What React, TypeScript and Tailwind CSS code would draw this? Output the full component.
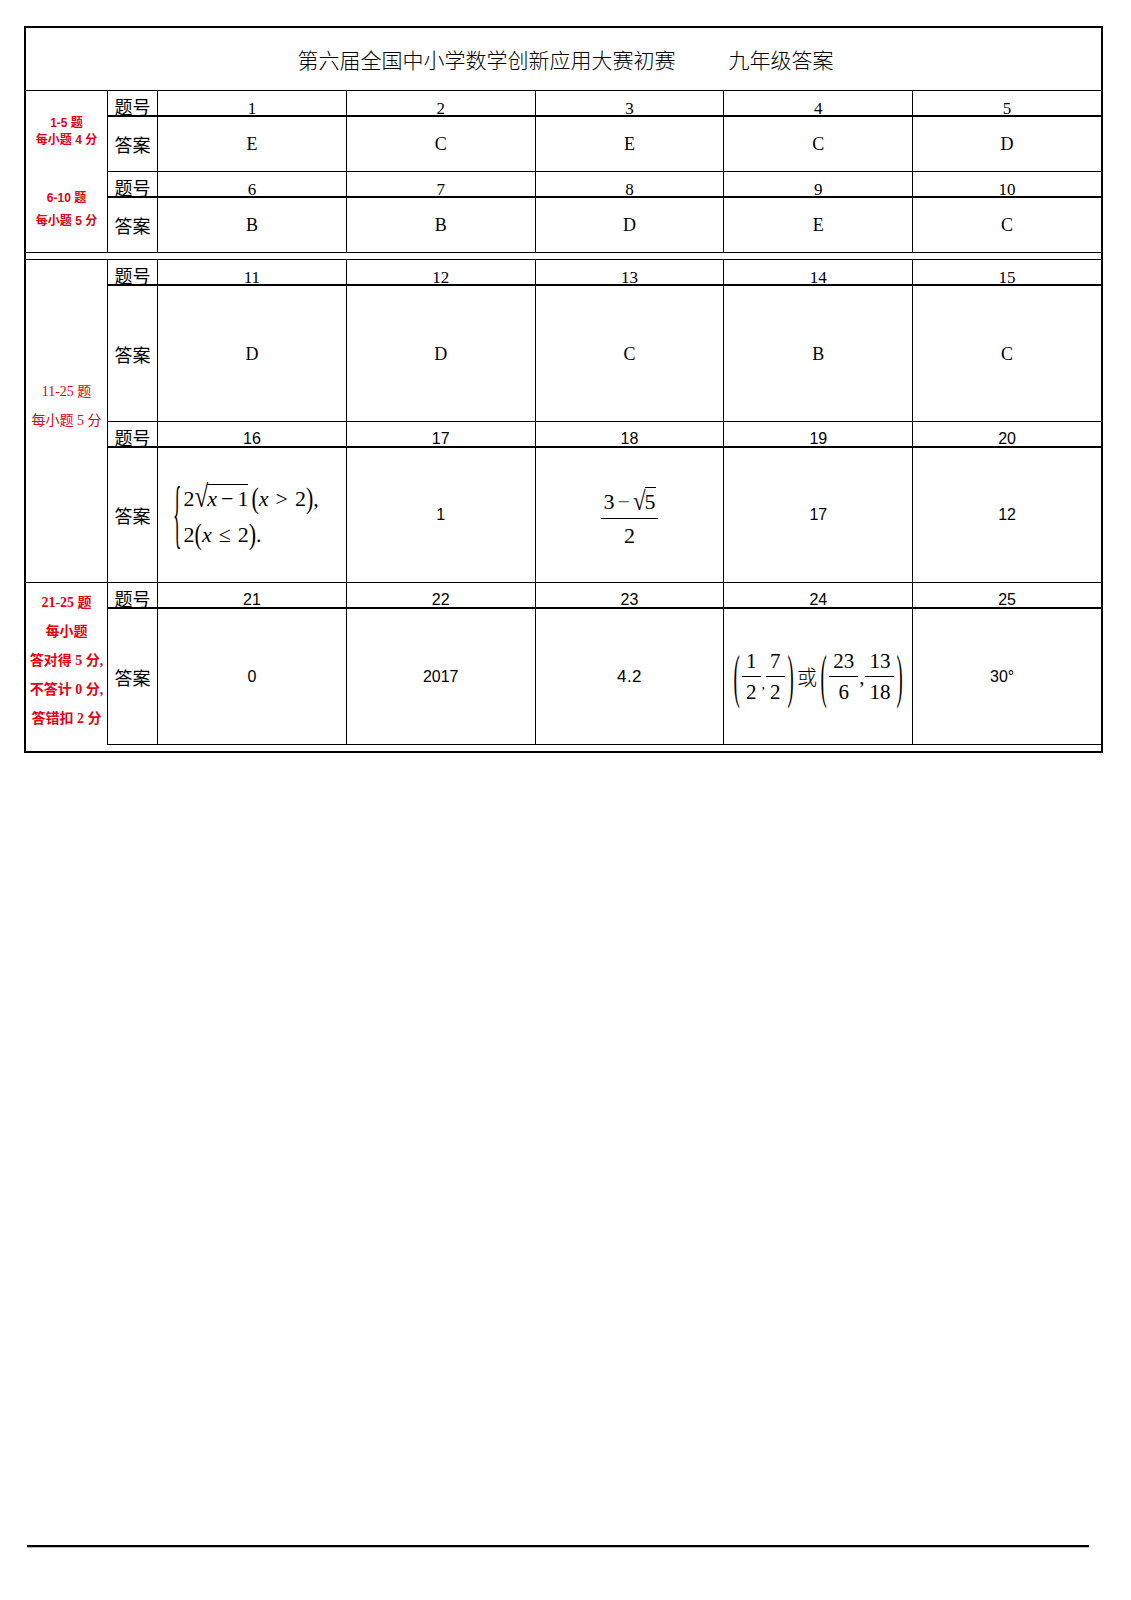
import React from "react";

const SERIF = "font-['Liberation_Serif','Noto_Sans_CJK_SC',serif]";
const SANS = "font-['Liberation_Sans','Noto_Sans_CJK_SC',sans-serif]";
const CJK = "font-['Noto_Sans_CJK_SC',sans-serif]";

function HeadLabel() {
  return (
    <div className="bg-white border-b border-black flex items-end justify-center">
      <span className={`${CJK} text-[18px] leading-none text-black`}>题号</span>
    </div>
  );
}

function AnsLabel({ last }: { last?: boolean }) {
  return (
    <div className={`bg-white flex items-center justify-center ${last ? "border-b border-black" : ""}`}>
      <span className={`${CJK} text-[18px] leading-none text-black`}>答案</span>
    </div>
  );
}

function HeadNum({ n, sans }: { n: string; sans?: boolean }) {
  return (
    <div className="bg-white border-b border-black flex items-end justify-center">
      {sans ? (
        <span className={`${SANS} text-[16px] leading-none translate-y-[1px] text-black`}>{n}</span>
      ) : (
        <span className={`${SERIF} text-[17px] leading-none translate-y-[2px] text-black`}>{n}</span>
      )}
    </div>
  );
}

function Ans({ children, last, className }: { children: React.ReactNode; last?: boolean; className?: string }) {
  return (
    <div className={`bg-white flex items-center justify-center ${last ? "border-b border-black" : ""} ${className ?? ""}`}>
      {children}
    </div>
  );
}

function Letter({ c }: { c: string }) {
  return <span className={`${SERIF} text-[18px] leading-none text-black`}>{c}</span>;
}

function Num({ c, className }: { c: string; className?: string }) {
  return <span className={`${SANS} text-[16px] leading-none text-black ${className ?? ""}`}>{c}</span>;
}

function Frac({ n, d }: { n: React.ReactNode; d: React.ReactNode }) {
  return (
    <span className="inline-flex flex-col items-center leading-none mx-[2px]">
      <span className="px-[4px] pb-[4px]">{n}</span>
      <span className="h-px w-full bg-black" />
      <span className="px-[4px] pt-[5px]">{d}</span>
    </span>
  );
}

function Sqrt({ children, big }: { children: React.ReactNode; big?: boolean }) {
  return (
    <span className="inline-flex items-end leading-none">
      <span
        className={`inline-block leading-none origin-bottom mr-[-1px] ${
          big ? "text-[25px] scale-y-[1.25] translate-y-[2px]" : "text-[23px] scale-y-[1.15] translate-y-[2px]"
        }`}
      >
        √
      </span>
      <span className="inline-block border-t-[1.5px] border-black pt-[3px] leading-none">{children}</span>
    </span>
  );
}

function BigParen({ c }: { c: string }) {
  return <span className="inline-block text-[22px] leading-none scale-y-[2.7] scale-x-[0.85] font-light">{c}</span>;
}

function Piecewise() {
  return (
    <div className={`flex items-center ${SERIF} text-black`}>
      <span className="inline-block text-[22px] leading-none scale-y-[3.5] scale-x-[0.8] mr-[1px] translate-y-[-1px]">{"{"}</span>
      <div className="flex flex-col gap-[14px] text-[22px] leading-none">
        <div className="flex items-end whitespace-nowrap">
          <span>2</span>
          <Sqrt big>
            <span className="italic">x</span>
            <span className="mx-[4px]">−</span>
            <span>1</span>
          </Sqrt>
          <span className="inline-block scale-y-[1.35] ml-[3px]">(</span>
          <span className="italic">x</span>
          <span className="mx-[7px]">&gt;</span>
          <span>2</span>
          <span className="inline-block scale-y-[1.35]">)</span>
          <span>,</span>
        </div>
        <div className="flex items-end whitespace-nowrap">
          <span>2</span>
          <span className="inline-block scale-y-[1.35]">(</span>
          <span className="italic">x</span>
          <span className="mx-[7px]">≤</span>
          <span>2</span>
          <span className="inline-block scale-y-[1.35]">)</span>
          <span>.</span>
        </div>
      </div>
    </div>
  );
}

function Ans18() {
  return (
    <span className={`${SERIF} text-[22px] text-black inline-flex flex-col items-center leading-none mt-[4px]`}>
      <span className="flex items-end px-[2px] pb-[5px]">
        <span>3</span>
        <span className="mx-[3px] text-[#666]">−</span>
        <Sqrt>
          <span>5</span>
        </Sqrt>
      </span>
      <span className="h-[1.5px] w-full bg-black" />
      <span className="pt-[6px]">2</span>
    </span>
  );
}

function Ans24() {
  return (
    <span className={`${SERIF} text-[21px] text-black inline-flex items-center leading-none`}>
      <BigParen c="(" />
      <Frac n="1" d="2" />
      <span className="self-center translate-y-[8px] text-[14px] mx-[-1px]">,</span>
      <Frac n="7" d="2" />
      <BigParen c=")" />
      <span className={`${CJK} text-[20px] font-light mx-[3px]`}>或</span>
      <BigParen c="(" />
      <Frac n="23" d="6" />
      <span className="self-center translate-y-[1px] mx-[-1px]">,</span>
      <Frac n="13" d="18" />
      <BigParen c=")" />
    </span>
  );
}

function RedBold({ children }: { children: React.ReactNode }) {
  return (
    <div className={`${SANS} font-bold text-[12px] leading-none text-[#e60012] whitespace-nowrap`}>{children}</div>
  );
}

function RedBold2({ children }: { children: React.ReactNode }) {
  return (
    <div className={`${SERIF} font-bold text-[14px] leading-none text-[#e60012] whitespace-nowrap`}>{children}</div>
  );
}

export default function App() {
  return (
    <div className="w-[1131px] min-h-[1600px] bg-white pt-[26px]">
      <div className="ml-[24px] w-[1079px] border-2 border-black">
        {/* Title */}
        <div className="h-[63px] border-b border-black flex items-center justify-center pl-[4px]">
          <span className={`${CJK} text-[21px] leading-none text-black font-light`}>第六届全国中小学数学创新应用大赛初赛</span>
          <span className={`${CJK} text-[21px] leading-none text-black font-light ml-[53px]`}>九年级答案</span>
        </div>

        {/* Section A: 1-10 */}
        <div className="grid grid-cols-[81px_49px_repeat(5,1fr)] grid-rows-[25px_54px_25px_54px] gap-px bg-black border-b border-black">
          <div className="row-span-4 col-start-1 row-start-1 bg-white flex flex-col">
            <div className="flex-1 flex flex-col items-center justify-center gap-[5px] pt-[1px]">
              <RedBold>1-5 题</RedBold>
              <RedBold>每小题 4 分</RedBold>
            </div>
            <div className="flex-1 flex flex-col items-center justify-center gap-[11px] pb-[4px]">
              <RedBold>6-10 题</RedBold>
              <RedBold>每小题 5 分</RedBold>
            </div>
          </div>
          <HeadLabel />
          {["1", "2", "3", "4", "5"].map((n) => (
            <HeadNum key={n} n={n} />
          ))}
          <AnsLabel />
          {["E", "C", "E", "C", "D"].map((c, i) => (
            <Ans key={i}>
              <Letter c={c} />
            </Ans>
          ))}
          <HeadLabel />
          {["6", "7", "8", "9", "10"].map((n) => (
            <HeadNum key={n} n={n} />
          ))}
          <AnsLabel />
          {["B", "B", "D", "E", "C"].map((c, i) => (
            <Ans key={i}>
              <Letter c={c} />
            </Ans>
          ))}
        </div>

        {/* spacer */}
        <div className="h-[7px] border-b border-black" />

        {/* Section B: 11-25 */}
        <div className="grid grid-cols-[81px_49px_repeat(5,1fr)] grid-rows-[25px_135px_25px_134px_25px_136px] gap-px bg-black">
          <div className="row-span-4 col-start-1 row-start-1 bg-white flex flex-col items-center justify-center gap-[15px] pb-[30px]">
            <div className={`${SERIF} text-[14px] leading-none text-[#e60012] whitespace-nowrap`}>11-25 题</div>
            <div className={`${SERIF} text-[14px] leading-none text-[#e60012] whitespace-nowrap`}>每小题 5 分</div>
          </div>
          <div className="row-span-2 col-start-1 row-start-5 bg-white flex flex-col items-center justify-center gap-[15px] pb-[6px]">
            <RedBold2>21-25 题</RedBold2>
            <RedBold2>每小题</RedBold2>
            <RedBold2>答对得 5 分,</RedBold2>
            <RedBold2>不答计 0 分,</RedBold2>
            <RedBold2>答错扣 2 分</RedBold2>
          </div>

          {/* 11-15 */}
          <HeadLabel />
          {["11", "12", "13", "14", "15"].map((n) => (
            <HeadNum key={n} n={n} />
          ))}
          <AnsLabel />
          {["D", "D", "C", "B", "C"].map((c, i) => (
            <Ans key={i}>
              <Letter c={c} />
            </Ans>
          ))}

          {/* 16-20 */}
          <HeadLabel />
          {["16", "17", "18", "19", "20"].map((n) => (
            <HeadNum key={n} n={n} sans />
          ))}
          <AnsLabel />
          <Ans className="!justify-start pl-[14px]">
            <Piecewise />
          </Ans>
          <Ans>
            <Num c="1" />
          </Ans>
          <Ans>
            <Ans18 />
          </Ans>
          <Ans>
            <Num c="17" />
          </Ans>
          <Ans>
            <Num c="12" />
          </Ans>

          {/* 21-25 */}
          <HeadLabel />
          {["21", "22", "23", "24", "25"].map((n) => (
            <HeadNum key={n} n={n} sans />
          ))}
          <AnsLabel last />
          <Ans last>
            <Num c="0" />
          </Ans>
          <Ans last>
            <Num c="2017" />
          </Ans>
          <Ans last>
            <Num c="4.2" className="text-[#444] text-[17px] tracking-[0.5px]" />
          </Ans>
          <Ans last>
            <Ans24 />
          </Ans>
          <Ans last>
            <Num c="30°" className="mr-[10px]" />
          </Ans>
        </div>
        <div className="h-[6px]" />
      </div>

      {/* footer rule */}
      <div className="mt-[792px] ml-[27px] w-[1062px] h-[2px] bg-black shadow-[0_1px_0_#bbbbbb]" />
    </div>
  );
}
